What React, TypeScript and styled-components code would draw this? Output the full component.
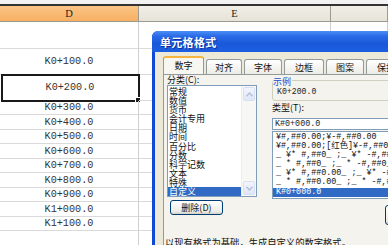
import React from 'react';
import styled, { createGlobalStyle, css } from 'styled-components';

const GlobalStyle = createGlobalStyle`
  html, body { margin: 0; padding: 0; background: #fff; }
  body {
    width: 388px;
    height: 245px;
    overflow: hidden;
    font-family: "Noto Sans CJK SC", "Liberation Sans", sans-serif;
  }
`;

const MONO = `"Liberation Mono", "Noto Sans CJK SC", monospace`;
const CJK = `"Noto Sans CJK SC", "Liberation Sans", sans-serif`;

const Screen = styled.div`
  position: relative;
  width: 388px;
  height: 245px;
  overflow: hidden;
  background: #fff;
`;

const TopStrip = styled.div`
  height: 4px;
  background: #f2f2f2;
  border-bottom: 2px solid #333;
`;

const SheetRow = styled.div<{ $h: number }>`
  display: grid;
  grid-template-columns: 139px 192px 1fr;
  height: ${p => p.$h}px;
`;

const HeaderCell = styled.div<{ $active?: boolean }>`
  box-sizing: border-box;
  border-right: 1px solid #9d9b8f;
  border-bottom: 1px solid #9d9b8f;
  display: flex;
  align-items: center;
  justify-content: center;
  font-family: "Liberation Serif", serif;
  font-size: 10.5px;
  color: #222;
  background: ${p =>
    p.$active ? 'linear-gradient(#fbc486, #f7b062)' : 'linear-gradient(#f1efe6, #e6e4d8)'};
`;

const Cell = styled.div<{ $selected?: boolean }>`
  position: relative;
  box-sizing: border-box;
  border-right: 1px solid #cfcfcf;
  border-bottom: 1px solid #dadada;
  display: flex;
  align-items: center;
  justify-content: center;
  font-family: ${MONO};
  font-size: 10.2px;
  color: #333;
  ${p =>
    p.$selected &&
    css`
      outline: 2px solid #1a1a1a;
      outline-offset: -1px;
      margin-left: 2px;
      &::after {
        content: '';
        position: absolute;
        right: -3px;
        bottom: -3px;
        width: 4px;
        height: 4px;
        background: #1a1a1a;
        border: 1px solid #fff;
      }
    `}
`;

/* ---------- dialog ---------- */

const Dialog = styled.div`
  position: absolute;
  left: 152px;
  top: 31px;
  width: 262px;
  height: 230px;
  box-sizing: border-box;
  display: flex;
  flex-direction: column;
  background: #1048d8;
  border-radius: 6px 6px 0 0;
  padding: 0 3px 3px;
`;

const TitleBar = styled.div`
  height: 21px;
  margin: 0 -3px;
  padding-left: 8px;
  display: flex;
  align-items: center;
  border-radius: 6px 6px 0 0;
  background: linear-gradient(#4b8ef7 0%, #2a6ae6 25%, #1a58da 60%, #1d5ee0 100%);
  color: #fff;
  font-family: ${CJK};
  font-weight: bold;
  font-size: 11px;
  letter-spacing: 0.3px;
  text-shadow: 1px 1px 0 #0b2f9a;
`;

const Body = styled.div`
  flex: 1;
  background: #ece9d8;
  padding: 5px 0 0 8px;
  display: flex;
  flex-direction: column;
`;

const Tabs = styled.div`
  display: flex;
  align-items: flex-end;
  gap: 2px;
  height: 17px;
  position: relative;
  z-index: 1;
`;

const Tab = styled.div<{ $w: number; $active?: boolean }>`
  box-sizing: border-box;
  width: ${p => p.$w}px;
  flex-shrink: 0;
  height: ${p => (p.$active ? 18 : 15)}px;
  border: 1px solid #919b9c;
  border-bottom: none;
  border-radius: 3px 3px 0 0;
  display: flex;
  align-items: center;
  justify-content: center;
  font-family: ${CJK};
  font-size: 9px;
  color: #111;
  background: ${p => (p.$active ? '#f7f6f1' : 'linear-gradient(#ffffff, #ecebe5)')};
  ${p =>
    p.$active &&
    css`
      border-top: 2px solid #f4b63f;
      padding-bottom: 1px;
    `}
`;

const Panel = styled.div`
  border: 1px solid #919b9c;
  border-right: none;
  background: #f4f3ee;
  padding: 0 0 0 3px;
  flex: 1;
  display: flex;
  flex-direction: column;
`;

const Columns = styled.div`
  display: grid;
  grid-template-columns: 90px 160px;
  column-gap: 15px;
  align-items: start;
`;

const Column = styled.div`
  display: flex;
  flex-direction: column;
  align-items: flex-start;
`;

const Label = styled.div<{ $mt?: number }>`
  margin-top: ${p => p.$mt ?? 0}px;
  font-family: ${CJK};
  font-size: 9px;
  line-height: 10px;
  height: 10px;
  color: #111;
  white-space: nowrap;
`;

const ListBox = styled.div<{ $h: number; $mt?: number }>`
  box-sizing: border-box;
  width: 100%;
  height: ${p => p.$h}px;
  margin-top: ${p => p.$mt ?? 0}px;
  border: 1px solid #7f9db9;
  background: #fff;
  display: flex;
  overflow: hidden;
`;

const Items = styled.div`
  flex: 1;
  min-width: 0;
  padding-top: 1px;
  overflow: hidden;
`;

const Item = styled.div<{ $selected?: boolean; $mono?: boolean }>`
  height: 9.1px;
  line-height: 9.1px;
  padding-left: ${p => (p.$mono ? 3 : 1)}px;
  font-family: ${p => (p.$mono ? MONO : CJK)};
  font-size: ${p => (p.$mono ? 8.4 : 9)}px;
  white-space: pre;
  color: ${p => (p.$selected ? '#fff' : '#111')};
  background: ${p => (p.$selected ? '#316ac5' : 'transparent')};
`;

const ScrollBar = styled.div`
  width: 14px;
  display: flex;
  flex-direction: column;
  background: #f7f7f3;
  border-left: 1px solid #eeede5;
`;

const ScrollButton = styled.div`
  box-sizing: border-box;
  height: 14px;
  margin: 1px;
  border: 1px solid #d6dff5;
  border-radius: 2px;
  background: linear-gradient(#f2f5fd, #dfe6f7);
  display: flex;
  align-items: center;
  justify-content: center;
`;

const ScrollTrack = styled.div`
  flex: 1;
`;

const Button = styled.div<{ $w: number; $h: number; $mt: number; $ml: number }>`
  box-sizing: border-box;
  width: ${p => p.$w}px;
  height: ${p => p.$h}px;
  margin: ${p => p.$mt}px 0 0 ${p => p.$ml}px;
  border: 1px solid #003c74;
  border-radius: 3px;
  background: linear-gradient(#ffffff, #ecebe6 80%, #d6d0c5);
  display: flex;
  align-items: center;
  justify-content: center;
  font-family: ${CJK};
  font-size: 9px;
  color: #111;
  white-space: nowrap;
`;

const SampleGroup = styled.div`
  position: relative;
  box-sizing: border-box;
  width: 100%;
  height: 21px;
  margin-top: 5px;
  border: 1px solid #d0d0bf;
  border-radius: 3px;
  padding: 6px 0 0 4px;
  font-family: ${MONO};
  font-size: 8.2px;
  line-height: 9px;
  color: #222;
`;

const Legend = styled.span`
  position: absolute;
  left: 0;
  top: -4px;
  padding-right: 1px;
  background: #f4f3ee;
  font-family: ${CJK};
  font-size: 9px;
  line-height: 10px;
  color: #1a4fd0;
`;

const TypeInput = styled.div`
  box-sizing: border-box;
  width: 100%;
  height: 12px;
  margin-top: 5px;
  border: 1px solid #7f9db9;
  background: #fff;
  padding-left: 2px;
  font-family: ${MONO};
  font-size: 8.4px;
  line-height: 10px;
  color: #222;
`;

const Hint = styled.div`
  margin: 12px 0 0 -2px;
  font-family: ${CJK};
  font-size: 9.3px;
  line-height: 10px;
  color: #111;
  white-space: nowrap;
`;

const Arrow = ({ up }: { up?: boolean }) => (
  <svg width="7" height="5" viewBox="0 0 7 5">
    <path
      d={up ? 'M0.5 4.2 L3.5 1 L6.5 4.2' : 'M0.5 0.8 L3.5 4 L6.5 0.8'}
      fill="none"
      stroke="#b4bfd6"
      strokeWidth="1.4"
    />
  </svg>
);

const rows: { h: number; text?: string; selected?: boolean }[] = [
  { h: 27 },
  { h: 26, text: 'K0+100.0' },
  { h: 26, text: 'K0+200.0', selected: true },
  { h: 14, text: 'K0+300.0' },
  { h: 15, text: 'K0+400.0' },
  { h: 14, text: 'K0+500.0' },
  { h: 15, text: 'K0+600.0' },
  { h: 14, text: 'K0+700.0' },
  { h: 15, text: 'K0+800.0' },
  { h: 14, text: 'K0+900.0' },
  { h: 15, text: 'K1+000.0' },
  { h: 14, text: 'K1+100.0' },
  { h: 15 },
];

const tabs = [
  { label: '数字', w: 41 },
  { label: '对齐', w: 36 },
  { label: '字体', w: 38 },
  { label: '边框', w: 40 },
  { label: '图案', w: 38 },
  { label: '保护', w: 40 },
];

const categories = ['常规', '数值', '货币', '会计专用', '日期', '时间', '百分比', '分数', '科学记数', '文本', '特殊', '自定义'];

const formats = [
  '¥#,##0.00;¥-#,##0.00',
  '¥#,##0.00;[红色]¥-#,##0.00',
  '_ ¥* #,##0_ ;_ ¥* -#,##0_ ;_ ¥* "-"_ ;_ @_ ',
  '_ * #,##0_ ;_ * -#,##0_ ;_ * "-"_ ;_ @_ ',
  '_ ¥* #,##0.00_ ;_ ¥* -#,##0.00_ ;_ ¥* "-"??_ ;_ @_ ',
  '_ * #,##0.00_ ;_ * -#,##0.00_ ;_ * "-"??_ ;_ @_ ',
  'K#0+000.0',
];

const App = () => (
  <Screen>
    <GlobalStyle />
    <TopStrip />
    <SheetRow $h={16}>
      <HeaderCell $active>D</HeaderCell>
      <HeaderCell>E</HeaderCell>
      <HeaderCell />
    </SheetRow>
    {rows.map((r, i) => (
      <SheetRow key={i} $h={r.h}>
        <Cell $selected={r.selected}>{r.text}</Cell>
        <Cell />
        <Cell />
      </SheetRow>
    ))}

    <Dialog>
      <TitleBar>单元格格式</TitleBar>
      <Body>
        <Tabs>
          {tabs.map((t, i) => (
            <Tab key={t.label} $w={t.w} $active={i === 0}>
              {t.label}
            </Tab>
          ))}
        </Tabs>
        <Panel>
          <Columns>
            <Column>
              <Label>分类(C):</Label>
              <ListBox $h={112}>
                <Items>
                  {categories.map((c, i) => (
                    <Item key={c} $selected={i === categories.length - 1}>
                      {c}
                    </Item>
                  ))}
                </Items>
                <ScrollBar>
                  <ScrollButton>
                    <Arrow up />
                  </ScrollButton>
                  <ScrollTrack />
                  <ScrollButton>
                    <Arrow />
                  </ScrollButton>
                </ScrollBar>
              </ListBox>
              <Button $w={53} $h={15} $mt={3} $ml={3}>删除(D)</Button>
            </Column>
            <Column>
              <SampleGroup>
                <Legend>示例</Legend>
                K0+200.0
              </SampleGroup>
              <Label $mt={2}>类型(T):</Label>
              <TypeInput>K#0+000.0</TypeInput>
              <ListBox $h={68} $mt={1}>
                <Items>
                  {formats.map((f, i) => (
                    <Item key={f} $mono $selected={i === formats.length - 1}>
                      {f}
                    </Item>
                  ))}
                </Items>
              </ListBox>
              <Button $w={60} $h={20} $mt={6} $ml={113}>添加</Button>
            </Column>
          </Columns>
          <Hint>以现有格式为基础，生成自定义的数字格式。</Hint>
        </Panel>
      </Body>
    </Dialog>
  </Screen>
);

export default App;
